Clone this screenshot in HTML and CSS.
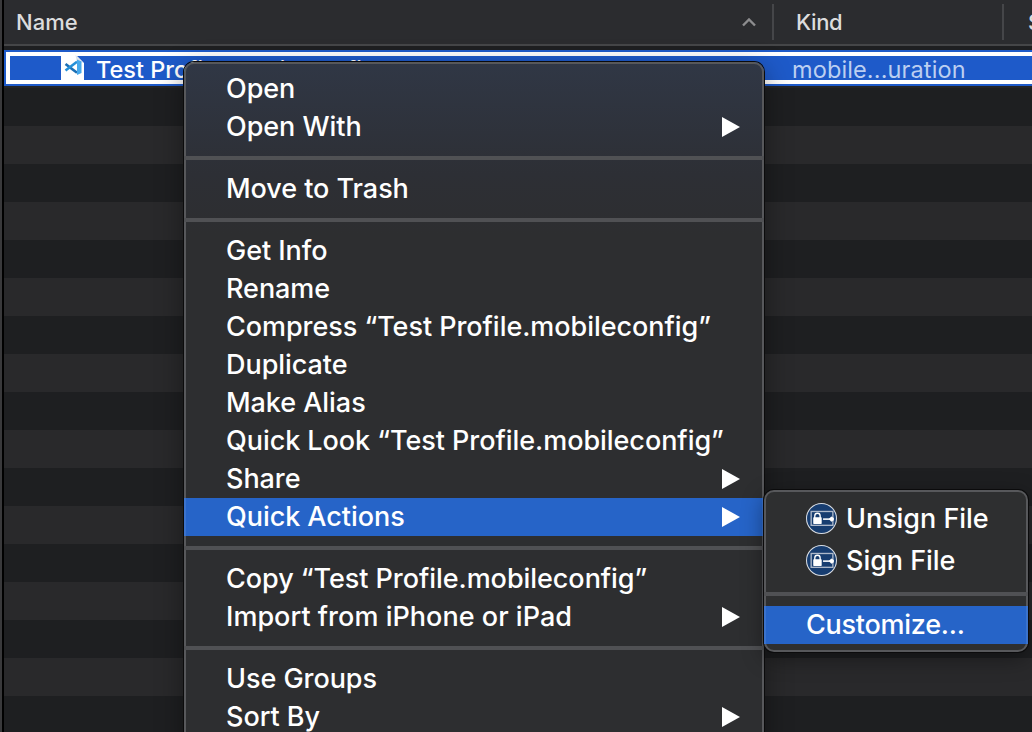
FILE: index.html
```html
<!DOCTYPE html>
<html lang="en">
<head>
<meta charset="utf-8">
<title>Finder</title>
<link rel="stylesheet" href="styles.css">
</head>
<body>
<svg class="defs" width="0" height="0">
  <symbol id="arrow" viewBox="0 0 18 20"><path d="M0 0L18 10L0 20Z" fill="#fff"/></symbol>
  <symbol id="sign" viewBox="0 0 30 30">
    <circle cx="15" cy="15" r="14.500" fill="#173d70" stroke="#d9dde3"/>
    <rect x="5" y="8.200" width="21" height="13.400" fill="none" stroke="#aeb9ca" stroke-width="1.300"/>
    <path d="M8.500 14.500V12.500a2.600 2.600 0 0 1 5.200 0v2" fill="none" stroke="#fff" stroke-width="1.300"/>
    <rect x="7" y="13.900" width="8.200" height="6.400" rx=".6" fill="#fff"/>
    <path d="M16.500 15.600H24" stroke="#fff" stroke-width="1.500"/>
    <path d="M22 15.600L24.500 13L27 14.500V16.700L24.500 18.200Z" fill="#fff"/>
  </symbol>
</svg>
<main class="finder">
  <header class="columns">
    <div class="column column-name"><span>Name</span>
      <svg class="sort" viewBox="0 0 14 9"><path d="M1 7.500L7 1.500L13 7.500" fill="none" stroke="#8d8d8f" stroke-width="2.400"/></svg>
    </div>
    <div class="column column-kind"><span>Kind</span></div>
    <div class="column column-size"><span>Size</span></div>
  </header>
  <section class="file-row">
    <div class="file-inner">
      <svg class="file-icon" viewBox="0 0 23 26">
        <path d="M0 0H15L23 8V26H0Z" fill="#fff"/>
        <path d="M14.500 0L22 7.500H16Z" fill="#dce3ea"/>
        <path d="M4.500 9L16 17.800" stroke="#1b6fb5" stroke-width="2.600"/>
        <path d="M4.500 15.500L16 6.800" stroke="#2590d8" stroke-width="2.600"/>
        <path d="M16 4.500L20.500 6.500V18L16 20Z" fill="#46a9ec"/>
      </svg>
      <span class="file-name">Test Profile.mobileconfig</span>
      <span class="file-kind">mobile...uration</span>
    </div>
  </section>
  <section class="stripes"></section>
</main>

<nav class="menu context-menu">
  <div class="item"><span>Open</span></div>
  <div class="item"><span>Open With</span><svg class="arrow"><use href="#arrow"/></svg></div>
  <hr>
  <div class="item"><span>Move to Trash</span></div>
  <hr>
  <div class="item"><span>Get Info</span></div>
  <div class="item"><span>Rename</span></div>
  <div class="item"><span>Compress “Test Profile.mobileconfig”</span></div>
  <div class="item"><span>Duplicate</span></div>
  <div class="item"><span>Make Alias</span></div>
  <div class="item"><span>Quick Look “Test Profile.mobileconfig”</span></div>
  <div class="item"><span>Share</span><svg class="arrow"><use href="#arrow"/></svg></div>
  <div class="item active"><span>Quick Actions</span><svg class="arrow"><use href="#arrow"/></svg></div>
  <hr>
  <div class="item"><span>Copy “Test Profile.mobileconfig”</span></div>
  <div class="item"><span class="wide">Import from iPhone or iPad</span><svg class="arrow"><use href="#arrow"/></svg></div>
  <hr>
  <div class="item"><span>Use Groups</span></div>
  <div class="item"><span>Sort By</span><svg class="arrow"><use href="#arrow"/></svg></div>
</nav>

<nav class="menu submenu">
  <div class="item action"><svg class="sign"><use href="#sign"/></svg><span>Unsign File</span></div>
  <div class="item action"><svg class="sign"><use href="#sign"/></svg><span>Sign File</span></div>
  <hr>
  <div class="item active"><span class="tight">Customize...</span></div>
</nav>
</body>
</html>
```
FILE: styles.css
```css
* { box-sizing: border-box; }
body {
  margin: 0;
  width: 1032px;
  height: 732px;
  overflow: hidden;
  position: relative;
  background: #1e1f21;
  font-family: Inter, "Liberation Sans", sans-serif;
  color: #fff;
}
.defs { position: absolute; }
.finder {
  height: 732px;
  display: flex;
  flex-direction: column;
  border-left: 2px solid #39393b;
  box-shadow: inset 2px 0 #000;
  padding-left: 2px;
}
.columns {
  height: 46px;
  flex: none;
  display: flex;
  background: #2b2c2f;
  border-bottom: 2px solid #454648;
  margin-bottom: 4px;
  overflow: hidden;
}
.column {
  display: flex;
  flex: none;
  align-items: center;
  height: 36px;
  margin-top: 4px;
  font-size: 22px;
  font-weight: 500;
  color: #dcdcdd;
  border-right: 2px solid #454649;
}
.column-name { width: 770px; padding: 0 16px 0 12px; justify-content: space-between; }
.column-kind { width: 230px; padding-left: 22px; letter-spacing: -.4px; }
.column-size { padding-left: 24px; border: 0; }
.sort { width: 14px; height: 9px; }
.file-row {
  height: 36px;
  flex: none;
  background: #1e5ac9;
  padding: 2px 0 2px 2px;
}
.file-inner {
  height: 32px;
  border: 4px solid #fff;
  border-right: 0;
  display: flex;
  align-items: center;
  font-size: 23.500px;
  font-weight: 500;
  line-height: 24px;
  padding-left: 51px;
}
.file-icon { width: 23px; height: 26px; margin-right: 12px; flex: none; }
.file-name { width: 696px; white-space: nowrap; padding-top: 4px; }
.file-kind { color: #bccff1; padding-top: 4px; font-weight: 400; letter-spacing: .12px; }
.stripes {
  flex: 1;
  border-top: 2px solid #242527;
  background: repeating-linear-gradient(#1e1f21 0 38px, #29292b 38px 76px);
}
.menu {
  position: absolute;
  background: #2d2e30;
  border: 2px solid #57585b;
  border-radius: 10px;
  font-size: 27px;
  font-weight: 500;
  letter-spacing: -.05px;
}
.context-menu {
  left: 184px;
  top: 62px;
  width: 580px;
  height: 690px;
  padding-top: 6px;
  background: linear-gradient(#303745 0, #2d2f35 110px, #2d2e30 170px);
  box-shadow: 0 0 0 1px #0b0b0c, 0 8px 28px rgba(0, 0, 0, .42);
}
.submenu {
  left: 764px;
  top: 490px;
  width: 264px;
  height: 162px;
  padding-top: 6px;
  background: #2e2f30;
  box-shadow: 0 0 0 1px #0b0b0c, 0 6px 22px rgba(0, 0, 0, .4);
}
.item {
  height: 38px;
  margin: 0 -2px;
  padding: 0 24px 2px 42px;
  display: flex;
  align-items: center;
  justify-content: space-between;
  white-space: nowrap;
}
.item.active {
  background: #2664c8;
  box-shadow: inset 2px 0 #3b73cd, inset -2px 0 #3b73cd;
}
.action { height: 42px; justify-content: flex-start; gap: 9px; }
.wide { letter-spacing: .03px; }
.tight { letter-spacing: -.25px; }
.arrow { width: 18px; height: 20px; margin-top: 2px; }
.sign { width: 31px; height: 31px; margin-top: 1px; }
.sign use { width: 31px; height: 31px; }
hr { height: 4px; margin: 10px -2px; border: 0; background: #505154; }
```
